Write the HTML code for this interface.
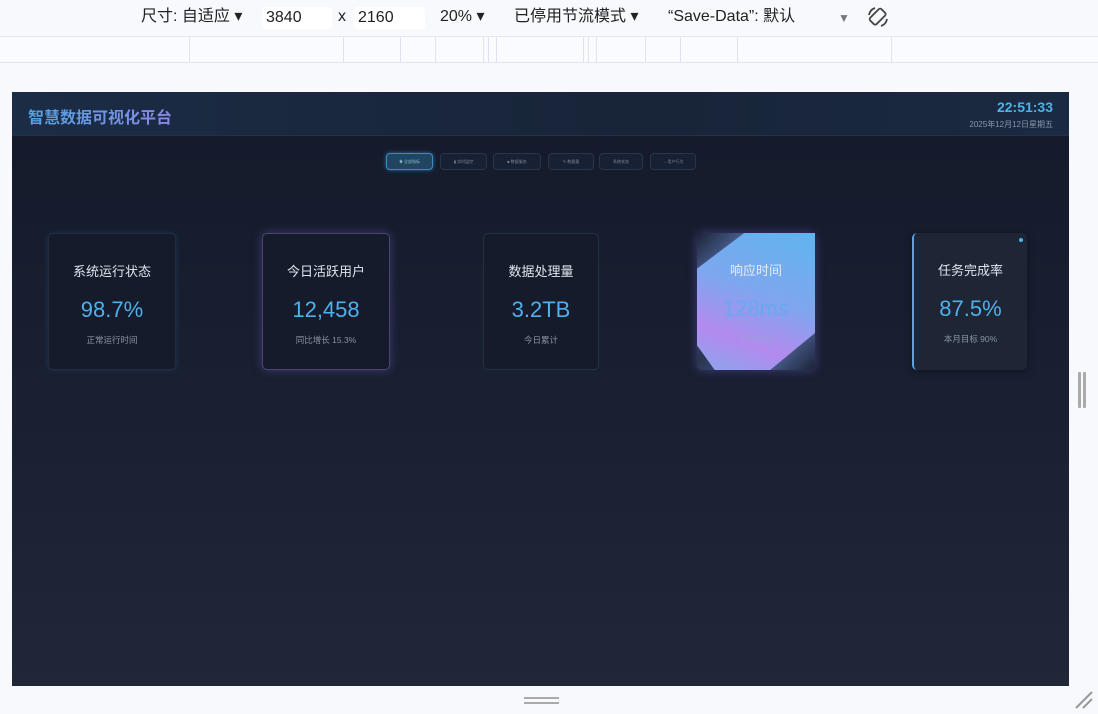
<!DOCTYPE html>
<html><head><meta charset="utf-8"><style>
*{margin:0;padding:0;box-sizing:border-box}
body{width:1098px;height:714px;background:#f7f9fc;font-family:"Liberation Sans","Noto Sans CJK SC",sans-serif;position:relative;overflow:hidden}
.tb{position:absolute;top:0;left:0;width:1098px;height:36px;color:#222;font-size:16px}
.tb span{position:absolute;top:6px;line-height:22px}
.inp{background:#fff;border-radius:3px;height:22px;top:7px!important;padding:0 4px}
.ruler{position:absolute;top:36px;left:0;width:1098px;height:27px;background:#f9fbfe;border-top:1px solid #e3e8f2;border-bottom:1px solid #dfe4ee}
.ruler i{position:absolute;top:0;width:1px;height:26px;background:#dde3f0}
.frame{position:absolute;left:12px;top:92px;width:1057px;height:594px;background:linear-gradient(180deg,#141a2a 0%,#1a2133 60%,#1f2739 100%);overflow:hidden}
.hdr{position:absolute;left:0;top:0;width:100%;height:44px;background:linear-gradient(90deg,#1b2c45,#182438 60%,#1a2a42);border-bottom:1px solid #233148}
.title{position:absolute;left:16px;top:12px;font-size:16px;font-weight:bold;background:linear-gradient(90deg,#4fa3e0,#8a86e8);-webkit-background-clip:text;color:transparent}
.time{position:absolute;right:16px;top:7px;font-size:14px;font-weight:bold;color:#4fb0ea}
.date{position:absolute;right:16px;top:27px;font-size:8px;color:#8896aa}
.btn{position:absolute;top:61px;height:17px;border:1px solid #2a3548;border-radius:4px;background:#182033;font-size:4px;color:#7b8799;text-align:center;line-height:15px}
.btn.a{background:#214460;border-color:#3b8ac2;box-shadow:0 0 4px #2d6ea0;color:#8bc}
.card{position:absolute;top:141px;width:128px;height:137px;border-radius:5px;background:#151b2b;text-align:center;border:1px solid #222c40}
.card .t{margin-top:27px;font-size:13px;color:#dfe5ee}
.card .v{margin-top:17px;font-size:22px;color:#4fb0ea}
.card .s{margin-top:11px;font-size:8.5px;color:#8a94a5}
</style></head><body>
<div class="tb">
<span style="left:141px">尺寸: 自适应 ▾</span>
<span class="inp" style="left:262px;width:70px">3840</span>
<span style="left:338px">x</span>
<span class="inp" style="left:354px;width:71px">2160</span>
<span style="left:440px">20% ▾</span>
<span style="left:514px">已停用节流模式 ▾</span>
<span style="left:668px">“Save-Data”: 默认</span>
<span style="left:838px;color:#777;font-size:12px;top:7px">▼</span>
<span style="left:866px;top:5px"><svg width="24" height="24" viewBox="0 0 24 24" fill="none" stroke="#444" stroke-width="1.8"><rect x="7" y="4" width="9" height="16" rx="2" transform="rotate(45 12 12)"/><path d="M3 10a9 9 0 0 1 6-7M21 14a9 9 0 0 1-6 7"/></svg></span>
</div>
<div class="ruler"><i style="left:189px"></i><i style="left:343px"></i><i style="left:400px"></i><i style="left:435px"></i><i style="left:483px"></i><i style="left:488px"></i><i style="left:496px"></i><i style="left:583px"></i><i style="left:588px"></i><i style="left:596px"></i><i style="left:645px"></i><i style="left:680px"></i><i style="left:737px"></i><i style="left:891px"></i></div>
<div class="frame">
<div class="hdr"><div class="title">智慧数据可视化平台</div><div class="time">22:51:33</div><div class="date">2025年12月12日星期五</div></div>
<div class="btn a" style="left:374px;width:47px">◉ 全部指标</div>
<div class="btn" style="left:428px;width:47px">▮ 实时监控</div>
<div class="btn" style="left:481px;width:48px">■ 数据服务</div>
<div class="btn" style="left:536px;width:46px">✎ 数据量</div>
<div class="btn" style="left:587px;width:44px">系统状态</div>
<div class="btn" style="left:638px;width:46px">→ 用户行为</div>

<div class="card" style="left:36px;box-shadow:0 0 6px rgba(60,120,180,.25)"><div class="t">系统运行状态</div><div class="v">98.7%</div><div class="s">正常运行时间</div></div>
<div class="card" style="left:250px;border-color:#4a4373;box-shadow:0 0 10px rgba(120,100,200,.4)"><div class="t">今日活跃用户</div><div class="v">12,458</div><div class="s">同比增长 15.3%</div></div>
<div class="card" style="left:471px;width:116px;border-color:#24323f"><div class="t">数据处理量</div><div class="v">3.2TB</div><div class="s">今日累计</div></div>
<div style="position:absolute;left:685px;top:141px;width:118px;height:137px;border-radius:5px;background:linear-gradient(135deg,#1a2236 0%,#4a5f90 20%,#2a3450 50%,#4a5f90 80%,#1a2236 100%);box-shadow:0 0 10px rgba(120,100,220,.45)"></div>
<div class="card" style="left:685px;width:118px;border:none;border-radius:0;background:linear-gradient(200deg,#5fb4ee 0%,#7fa6ee 45%,#b38aee 75%,#8aa6ec 100%);clip-path:polygon(40% 0,100% 0,100% 73%,62% 100%,15% 100%,0 82%,0 26%)"><div class="t" style="color:#e8ecf8">响应时间</div><div class="v" style="color:#6aa8f0">128ms</div><div class="s" style="color:#9aa0dc">平均响应</div></div>
<div class="card" style="left:900px;width:115px;background:#1e2535;border:none;border-left:2px solid #5fa0e0;box-shadow:0 2px 8px rgba(0,0,0,.4)"><div style="position:absolute;right:4px;top:5px;width:4px;height:4px;border-radius:50%;background:#4fb0ea"></div><div class="t">任务完成率</div><div class="v">87.5%</div><div class="s">本月目标 90%</div></div>
</div>
<div style="position:absolute;left:1078px;top:372px;width:3px;height:36px;background:#aaa;border-radius:1px"></div>
<div style="position:absolute;left:1083px;top:372px;width:3px;height:36px;background:#aaa;border-radius:1px"></div>
<div style="position:absolute;left:524px;top:697px;width:35px;height:2px;background:#aaa"></div>
<div style="position:absolute;left:524px;top:702px;width:35px;height:2px;background:#aaa"></div>
<svg style="position:absolute;left:1074px;top:690px" width="20" height="20"><path d="M2 18L18 2M9 18L18 9" stroke="#999" stroke-width="2"/></svg>
</body></html>
